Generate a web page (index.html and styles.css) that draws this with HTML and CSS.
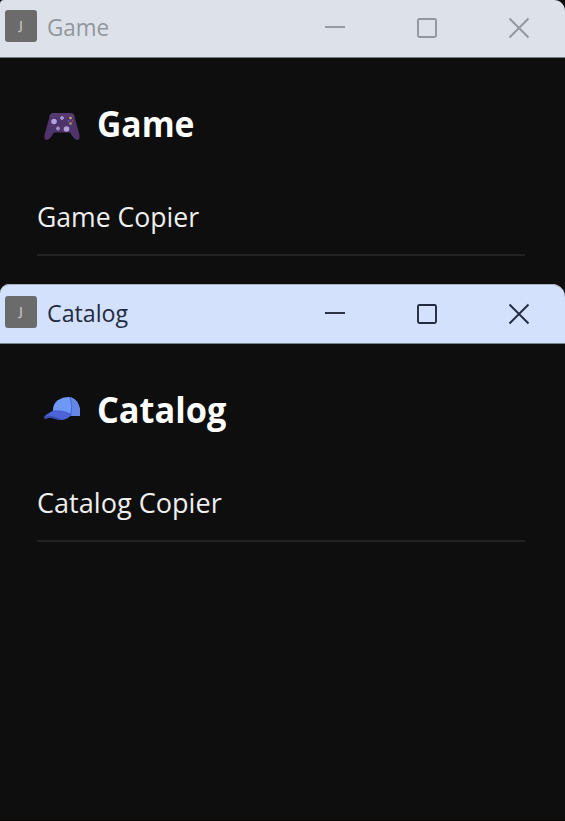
FILE: index.html
```html
<!DOCTYPE html>
<html lang="en">
<head>
<meta charset="utf-8">
<title>Catalog</title>
<link rel="stylesheet" href="styles.css">
</head>
<body>
<section class="window inactive">
  <header class="titlebar">
    <span class="app-icon">J</span>
    <span class="title"><span class="title-text">Game</span></span>
    <div class="controls">
      <svg viewBox="0 0 24 24"><path d="M2 11H22"/></svg>
      <svg viewBox="0 0 24 24"><rect x="3" y="3" width="18" height="18" rx="1.5"/></svg>
      <svg viewBox="0 0 24 24"><path d="M2.5 2.5 21.5 21.5M21.5 2.5 2.5 21.5"/></svg>
    </div>
  </header>
  <main class="content">
    <h1 class="heading">
      <svg class="emoji" viewBox="0 0 36 28"><path d="M6 2Q7 0 10 0H26Q29 0 30 2L35.5 22Q36 27 33 27Q31 27 29 24L26 19.5H10L7 24Q5 27 2.5 27Q0 27 .5 22Z" fill="#4f346c"/><path d="M6 2Q7 0 10 0H26Q29 0 30 2L31 4H5Z" fill="#56396f"/><circle cx="10" cy="8.5" r="2.8" fill="#b1a0dc"/><circle cx="22.5" cy="16" r="2.8" fill="#b1a0dc"/><path d="M14 13.5v4M12 15.5h4M18 3v4M16 5h4" stroke="#a292cb" stroke-width="1.8"/><circle cx="26.5" cy="5" r="1.3" fill="#d3ae54"/><circle cx="26.5" cy="10.5" r="1.3" fill="#a9a05c"/><circle cx="28.5" cy="8" r=".8" fill="#bb4965"/><circle cx="24.5" cy="8" r=".8" fill="#5a77b9"/></svg>
      <span class="heading-text">Game</span>
    </h1>
    <p class="subtitle"><span class="subtitle-text">Game Copier</span></p>
  </main>
</section>
<section class="window active">
  <header class="titlebar">
    <span class="app-icon">J</span>
    <span class="title"><span class="title-text">Catalog</span></span>
    <div class="controls">
      <svg viewBox="0 0 24 24"><path d="M2 11H22"/></svg>
      <svg viewBox="0 0 24 24"><rect x="3" y="3" width="18" height="18" rx="1.5"/></svg>
      <svg viewBox="0 0 24 24"><path d="M2.5 2.5 21.5 21.5M21.5 2.5 2.5 21.5"/></svg>
    </div>
  </header>
  <main class="content">
    <h1 class="heading">
      <svg class="emoji" viewBox="0 0 36 28"><path d="M9 15C8 5 16 0 25 0C33 1 37 9 36 19L26 18Z" fill="#6d98f3"/><path d="M26 0Q29 8 27 19L36 19C37 9 33 2 26 0Z" fill="#6386e7"/><path d="M26 0Q29 8 27 18" fill="none" stroke="#4269cf" stroke-width="1"/><path d="M9 13.5Q18 12 28 17Q25 22 18 23Q13 23 9 21Q5 20 1 22Q-1 20 2 18Q6 15 9 13.5Z" fill="#4c63d6"/><path d="M1 20Q5 18 10 19.5L18 22.5Q11 23 7 20.5Q3 21 1 22Z" fill="#3b4cb0"/></svg>
      <span class="heading-text">Catalog</span>
    </h1>
    <p class="subtitle"><span class="subtitle-text">Catalog Copier</span></p>
  </main>
</section>
</body>
</html>
```
FILE: styles.css
```css
* { box-sizing: border-box; }
body {
  margin: 0;
  height: 821px;
  display: flex;
  flex-direction: column;
  overflow: hidden;
  background: #0e0e0e;
  font-family: "Open Sans", "Noto Sans", sans-serif;
}
.window { background: #0e0e0e; }
.inactive { height: 284px; }
.active { flex: 1; border-bottom: 1px solid #090606; }
.titlebar {
  display: flex;
  align-items: center;
  padding: 0 34px 0 5px;
}
.inactive .titlebar {
  height: 58px;
  padding-bottom: 2px;
  border-bottom: 1px solid #777b80;
  border-radius: 4px 11px 0 0;
  background: #dde2ea;
  color: #92969d;
}
.active .titlebar {
  height: 60px;
  border-bottom: 1px solid #7b8494;
  border-radius: 9px 13px 0 0;
  box-shadow: inset 0 1px #a5afbf;
  background: #d3e1fd;
  color: #232b40;
}
.app-icon {
  width: 32px;
  height: 32px;
  margin: 0 10px 3px 0;
  border-radius: 3px;
  background: #6b6b6b;
  color: #bebebe;
  font-size: 13px;
  font-weight: 600;
  line-height: 31px;
  text-align: center;
}
.title { flex: 1; font-size: 24px; line-height: 32px; padding-bottom: 1px; }
.title-text, .heading-text, .subtitle-text {
  display: inline-block;
  transform-origin: 0 50%;
}
.inactive .title-text { transform: scaleX(.935); }
.active .title-text { transform: scaleX(.968); }
.controls { display: flex; gap: 68px; }
.controls svg {
  width: 24px;
  height: 24px;
  fill: none;
  stroke: currentColor;
  stroke-width: 1.9;
}
.content { padding: 40px 40px 0 37px; }
.heading {
  display: flex;
  align-items: center;
  height: 50px;
  margin: 0;
  padding-left: 7px;
  color: #fff;
  font-size: 35px;
  font-weight: 700;
}
.emoji { width: 36px; height: 28px; margin: 7px 17px 0 0; }
.active .emoji { margin-top: 3px; }
.inactive .heading-text { transform: scaleX(.96); }
.active .heading-text { transform: scaleX(.98); }
.subtitle {
  height: 69px;
  margin: 39px 0 0;
  border-bottom: 2px solid #222;
  color: #efefef;
  font-size: 27px;
  font-weight: 450;
  line-height: 59px;
}
.inactive .subtitle-text { transform: scaleX(.985); }
.active .subtitle-text { transform: scaleX(1.003); }
```
